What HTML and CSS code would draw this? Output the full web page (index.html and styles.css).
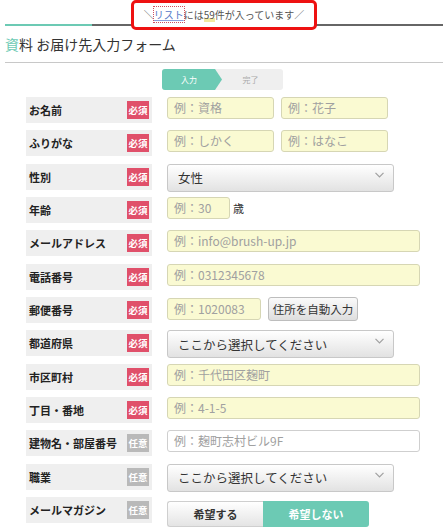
FILE: index.html
```html
<!DOCTYPE html>
<html lang="ja">
<head>
<meta charset="utf-8">
<link rel="stylesheet" href="styles.css">
</head>
<body>
<div class="page">
  <div class="top">
    <div class="progress"><div class="progress-fill"></div></div>
    <div class="notice">＼<span class="link">リスト</span>には<span class="num">59</span>件が入っています／</div>
  </div>
  <h1 class="title"><span class="accent">資</span>料 お届け先入力フォーム</h1>
  <hr class="rule">
  <div class="steps">
    <div class="step step-active">入力</div>
    <div class="step step-done">完了</div>
  </div>
  <div class="form">
    <div class="row">
      <div class="label">お名前<span class="badge req">必須</span></div>
      <div class="controls">
        <div class="input w107">例：資格</div>
        <div class="input w107">例：花子</div>
      </div>
    </div>
    <div class="row">
      <div class="label">ふりがな<span class="badge req">必須</span></div>
      <div class="controls">
        <div class="input w107">例：しかく</div>
        <div class="input w107">例：はなこ</div>
      </div>
    </div>
    <div class="row">
      <div class="label">性別<span class="badge req">必須</span></div>
      <div class="controls">
        <div class="select"><span class="select-value">女性</span><svg class="chev" width="9" height="6" viewBox="0 0 9 6"><polyline points="0.5,0.8 4.5,4.8 8.5,0.8" fill="none" stroke="#a0a0a0" stroke-width="1.2"/></svg></div>
      </div>
    </div>
    <div class="row">
      <div class="label">年齢<span class="badge req">必須</span></div>
      <div class="controls">
        <div class="input w63">例：30</div>
        <span class="unit">歳</span>
      </div>
    </div>
    <div class="row">
      <div class="label">メールアドレス<span class="badge req">必須</span></div>
      <div class="controls">
        <div class="input w253">例：info@brush-up.jp</div>
      </div>
    </div>
    <div class="row">
      <div class="label">電話番号<span class="badge req">必須</span></div>
      <div class="controls">
        <div class="input w253">例：0312345678</div>
      </div>
    </div>
    <div class="row">
      <div class="label">郵便番号<span class="badge req">必須</span></div>
      <div class="controls">
        <div class="input w94 postal">例：1020083</div>
        <div class="btn">住所を自動入力</div>
      </div>
    </div>
    <div class="row">
      <div class="label">都道府県<span class="badge req">必須</span></div>
      <div class="controls">
        <div class="select"><span class="select-value">ここから選択してください</span><svg class="chev" width="9" height="6" viewBox="0 0 9 6"><polyline points="0.5,0.8 4.5,4.8 8.5,0.8" fill="none" stroke="#a0a0a0" stroke-width="1.2"/></svg></div>
      </div>
    </div>
    <div class="row">
      <div class="label">市区町村<span class="badge req">必須</span></div>
      <div class="controls">
        <div class="input w253">例：千代田区麹町</div>
      </div>
    </div>
    <div class="row">
      <div class="label">丁目・番地<span class="badge req">必須</span></div>
      <div class="controls">
        <div class="input w253">例：4-1-5</div>
      </div>
    </div>
    <div class="row">
      <div class="label">建物名・部屋番号<span class="badge opt">任意</span></div>
      <div class="controls">
        <div class="input w253 plain">例：麹町志村ビル9F</div>
      </div>
    </div>
    <div class="row">
      <div class="label">職業<span class="badge opt">任意</span></div>
      <div class="controls">
        <div class="select"><span class="select-value">ここから選択してください</span><svg class="chev" width="9" height="6" viewBox="0 0 9 6"><polyline points="0.5,0.8 4.5,4.8 8.5,0.8" fill="none" stroke="#a0a0a0" stroke-width="1.2"/></svg></div>
      </div>
    </div>
    <div class="row">
      <div class="label">メールマガジン<span class="badge opt">任意</span></div>
      <div class="controls">
        <div class="toggle">
          <div class="toggle-opt toggle-off">希望する</div>
          <div class="toggle-opt toggle-on">希望しない</div>
        </div>
      </div>
    </div>
  </div>
</div>
</body>
</html>
```

FILE: styles.css
```css
* { box-sizing: border-box; }
html, body { margin: 0; padding: 0; background: #fff; }
body {
  font-family: "Noto Sans CJK JP", "Noto Sans", sans-serif;
  color: #333;
  width: 448px;
  height: 530px;
  overflow: hidden;
}
.page { padding: 0 5px; }

.top { position: relative; padding-top: 24px; }
.progress { height: 2px; background: #666; }
.progress-fill { width: 87px; height: 2px; background: #6ccab4; }

.notice {
  position: absolute;
  left: 126px;
  top: 0;
  width: 186px;
  height: 30px;
  border: 3px solid #ee1111;
  border-radius: 5px;
  background: #fff;
  font-size: 10px;
  line-height: 22px;
  color: #555;
  text-align: center;
  padding-top: 1px;
  white-space: nowrap;
}
.link {
  color: #5577c8;
  outline: 1px dotted #d05060;
  text-decoration: underline;
  text-decoration-color: #8aa0dd;
}
.num { background: linear-gradient(transparent 75%, #f3e9a0 75%); }

.title {
  margin: 8px 0 0;
  font-size: 14px;
  font-weight: normal;
  line-height: 20px;
  color: #333;
}
.accent { color: #6ccab4; }

.rule { margin: 8px 0 0; border: 0; height: 1px; background: #c8c8c8; }

.steps {
  margin: 6px 0 0 157px;
  width: 121px;
  height: 21px;
  display: flex;
  background: #efefef;
  border-radius: 3px;
  font-size: 8px;
  line-height: 21px;
}
.step { text-align: center; }
.step-active {
  width: 60px;
  background: #6ccab4;
  color: #fff;
  border-radius: 3px 0 0 3px;
  clip-path: polygon(0 0, 53px 0, 60px 50%, 53px 100%, 0 100%);
  padding-right: 6px;
}
.step-done { flex: 1; color: #aaa; padding-right: 4px; }

.form { margin: 7px 0 0 21px; }
.row {
  display: flex;
  height: 26px;
  margin-bottom: 7.33px;
}
.label {
  width: 126px;
  flex: none;
  height: 26px;
  background: #efefef;
  display: flex;
  align-items: center;
  justify-content: space-between;
  padding: 0 3px 0 3px;
  font-size: 11px;
  font-weight: bold;
  color: #222;
  white-space: nowrap;
}
.badge {
  width: 22px;
  height: 18px;
  font-size: 9.5px;
  line-height: 18px;
  text-align: center;
  color: #fff;
  font-weight: bold;
}
.req { background: #e0506a; }
.opt { background: #b9b9b9; }

.controls {
  margin-left: 15px;
  display: flex;
  align-items: flex-start;
  gap: 7px;
}
.input {
  height: 22px;
  background: #fafad2;
  border: 1px solid #d6d6b4;
  border-radius: 3px;
  font-size: 12px;
  line-height: 20px;
  color: #a0a0a0;
  padding-left: 6px;
  white-space: nowrap;
}
.plain { background: #fff; border-color: #cfcfcf; }
.w107 { width: 107px; }
.w63 { width: 63px; }
.w94 { width: 94px; }
.w253 { width: 253px; }
.postal { margin-top: 1px; }
.unit { font-size: 11px; line-height: 22px; margin-left: -4px; color: #333; }

.select {
  width: 227px;
  height: 28px;
  border: 1px solid #c8c8c8;
  border-radius: 3px;
  background: linear-gradient(#ffffff, #e2e2e2);
  display: flex;
  align-items: center;
  justify-content: space-between;
  padding: 0 9px 0 10px;
  font-size: 12.5px;
  color: #333;
}
.chev { margin-top: -6px; }

.btn {
  width: 90px;
  height: 24px;
  border: 1px solid #bdbdbd;
  border-radius: 3px;
  background: linear-gradient(#fafafa, #dedede);
  font-size: 11.5px;
  line-height: 22px;
  text-align: center;
  color: #333;
}

.toggle { display: flex; margin-top: 4px; height: 26px; }
.toggle-opt {
  font-size: 11px;
  font-weight: bold;
  line-height: 26px;
  text-align: center;
}
.toggle-off {
  width: 96px;
  border: 1px solid #cfcfcf;
  border-right: 0;
  border-radius: 3px 0 0 3px;
  background: linear-gradient(#ffffff, #e4e4e4);
  color: #333;
  line-height: 24px;
}
.toggle-on {
  width: 106px;
  background: #6ccab4;
  color: #fff;
  border-radius: 0 3px 3px 0;
}
```
